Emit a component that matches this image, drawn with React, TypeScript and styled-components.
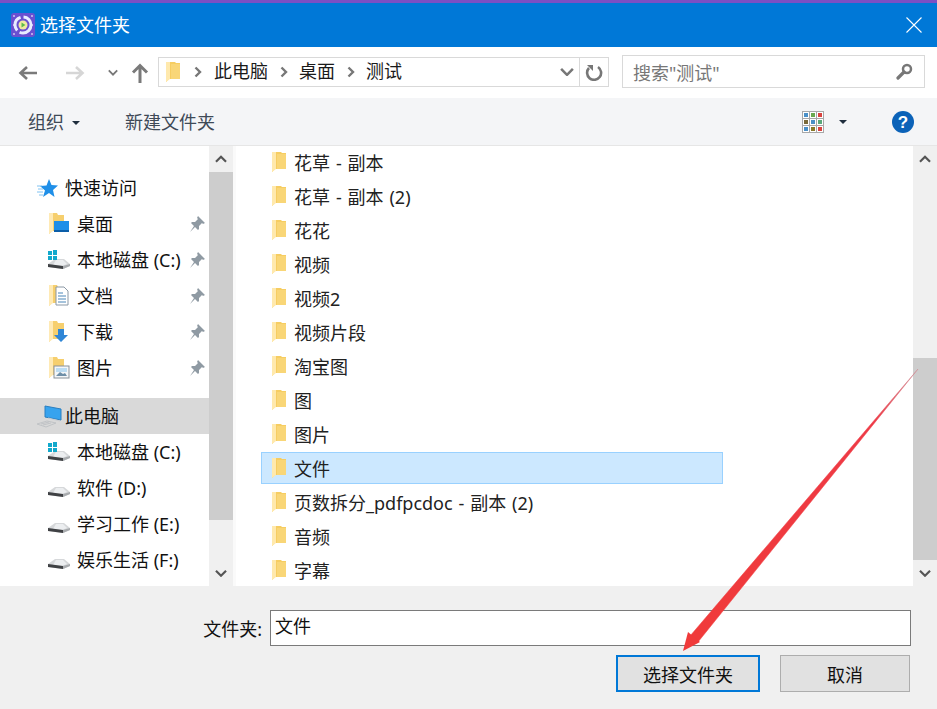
import React from "react";
import styled, { createGlobalStyle } from "styled-components";

const Global = createGlobalStyle`
  html, body { margin: 0; padding: 0; background: #f0f0f0; }
  * { box-sizing: border-box; }
`;

const Dialog = styled.div`
  position: relative;
  width: 937px;
  height: 709px;
  overflow: hidden;
  display: flex;
  flex-direction: column;
  font-family: "Noto Sans", "Noto Sans CJK SC", sans-serif;
  font-size: 18px;
  color: #1a1a1a;
  background: #f0f0f0;
`;

const TitleBar = styled.header`
  height: 47px;
  flex: none;
  display: flex;
  align-items: center;
  gap: 5px;
  padding: 0 15px 0 11px;
  background: #0078d7;
  border-top: 3px solid #7c4fc4;
  color: #fff;
`;
const Title = styled.span`
  flex: 1;
  line-height: 24px;
  margin-top: -1px;
`;

const NavBar = styled.nav`
  height: 51px;
  flex: none;
  display: flex;
  align-items: center;
  background: #fff;
  padding-left: 18px;
`;
const NavButton = styled.span<{ $w: number }>`
  width: ${(p) => p.$w}px;
  flex: none;
  height: 24px;
  display: flex;
  align-items: center;
`;
const AddressBox = styled.div`
  width: 451px;
  height: 30px;
  flex: none;
  margin-top: -2px;
  border: 1px solid #d9d9d9;
  display: flex;
  align-items: center;
  padding-left: 6px;
`;
const Crumbs = styled.div`
  flex: 1;
  display: flex;
  align-items: center;
`;
const Crumb = styled.span`
  line-height: 24px;
  margin-top: -1px;
`;
const CrumbSep = styled.span<{ $w: number }>`
  width: ${(p) => p.$w}px;
  display: flex;
  justify-content: center;
  flex: none;
`;
const AddressEnd = styled.div`
  width: 29px;
  height: 100%;
  border-left: 1px solid #d9d9d9;
  display: flex;
  align-items: center;
  justify-content: center;
`;
const DropSlot = styled.span`
  display: flex;
  margin-right: 5px;
`;
const SearchBox = styled.div`
  width: 303px;
  height: 33px;
  margin: -2px 0 0 13px;
  flex: none;
  border: 1px solid #d9d9d9;
  display: flex;
  align-items: center;
  justify-content: space-between;
  padding: 0 11px 0 10px;
  color: #777;
`;

const Toolbar = styled.div`
  height: 48px;
  flex: none;
  display: flex;
  align-items: center;
  background: #f4f5f7;
  border-bottom: 1px solid #e6e6e6;
  padding: 0 22px 0 28px;
  color: #3f4a57;
`;
const ToolText = styled.span`
  line-height: 24px;
`;
const Caret = styled.span`
  width: 0;
  height: 0;
  border-left: 4px solid transparent;
  border-right: 4px solid transparent;
  border-top: 4px solid #1f2d3d;
`;
const OrgCaret = styled(Caret)`
  margin: 2px 45px 0 8px;
`;
const Spacer = styled.span`
  flex: 1;
`;
const ViewCaret = styled(Caret)`
  margin: 0 44px 0 15px;
`;

const Main = styled.main`
  height: 440px;
  flex: none;
  display: flex;
  background: #fff;
`;
const Sidebar = styled.aside`
  width: 209px;
  flex: none;
  padding-top: 24px;
  overflow: hidden;
`;
const SideRow = styled.div<{ $level: number; $selected?: boolean; $gap?: number }>`
  height: 36px;
  margin-top: ${(p) => p.$gap ?? 0}px;
  display: flex;
  align-items: center;
  padding-left: ${(p) => (p.$level === 0 ? 37 : 47)}px;
  padding-right: 4px;
  background: ${(p) => (p.$selected ? "#d9d9d9" : "transparent")};
`;
const SideIcon = styled.span<{ $level: number }>`
  width: ${(p) => (p.$level === 0 ? 28 : 30)}px;
  height: 24px;
  flex: none;
  display: flex;
  align-items: center;
`;
const SideLabel = styled.span`
  flex: 1;
  white-space: nowrap;
  line-height: 24px;
  color: #111;
`;
const Scrollbar = styled.div`
  width: 24px;
  flex: none;
  background: #f0f0f0;
  display: flex;
  flex-direction: column;
`;
const ScrollArrow = styled.div<{ $h: number }>`
  height: ${(p) => p.$h}px;
  flex: none;
  display: flex;
  align-items: center;
  justify-content: center;
`;
const ScrollTrack = styled.div<{ $justify: string }>`
  flex: 1;
  display: flex;
  flex-direction: column;
  justify-content: ${(p) => p.$justify};
`;
const ScrollThumb = styled.div<{ $h: number }>`
  height: ${(p) => p.$h}px;
  background: #cdcdcd;
`;
const Gutter = styled.div`
  width: 3px;
  flex: none;
  background: #fafafa;
`;
const FileList = styled.section`
  flex: 1;
  display: flex;
  flex-direction: column;
  padding-left: 25px;
  overflow: hidden;
`;
const FileRow = styled.div<{ $selected?: boolean }>`
  width: 462px;
  height: 32px;
  flex: none;
  margin: 1px 0;
  &:first-child {
    margin-top: 0;
  }
  display: flex;
  align-items: center;
  gap: 8px;
  padding-left: 9px;
  border: 1px solid ${(p) => (p.$selected ? "#99d1ff" : "transparent")};
  background: ${(p) => (p.$selected ? "#cce8ff" : "transparent")};
  color: #222;
  white-space: nowrap;
  word-spacing: 1.2px;
`;
const FileName = styled.span`
  margin-left: -1px;
`;

const Footer = styled.footer`
  flex: 1;
  display: flex;
  flex-direction: column;
  padding: 24px 26px 0 0;
`;
const FieldRow = styled.div`
  display: flex;
  align-items: center;
  justify-content: flex-end;
  gap: 8px;
`;
const FieldLabel = styled.label`
  color: #111;
`;
const FieldInput = styled.div`
  width: 641px;
  height: 36px;
  border: 1px solid #7a7a7a;
  background: #fff;
  color: #111;
  padding: 2px 4px;
  line-height: 26px;
`;
const Buttons = styled.div`
  display: flex;
  justify-content: flex-end;
  gap: 20px;
  margin-top: 9px;
  padding-right: 1px;
`;
const Button = styled.div<{ $primary?: boolean }>`
  width: ${(p) => (p.$primary ? 144 : 130)}px;
  height: 37px;
  display: flex;
  align-items: center;
  justify-content: center;
  background: #e1e1e1;
  border: ${(p) => (p.$primary ? "2px solid #0078d7" : "1px solid #adadad")};
  color: #111;
`;
const ArrowLayer = styled.svg`
  position: absolute;
  left: 0;
  top: 0;
  pointer-events: none;
`;

const Folder = () => (
  <svg width="16" height="22" viewBox="0 0 16 22">
    <path d="M1 1h9l1 1h4v16H4l-3 3z" fill="#f6cd62" />
    <path d="M6 3h9v15H6z" fill="#f9d677" />
    <path d="M1 1h4v17l-4 3z" fill="#ffe9ad" />
  </svg>
);
const SmallFolderBase = () => (
  <>
    <path d="M2 1h8l1 2h6v16H5l-3 3z" fill="#f6cf6e" />
    <path d="M2 1h4v18l-4 3z" fill="#ffeab5" />
  </>
);
const DesktopIcon = () => (
  <svg width="26" height="24" viewBox="0 0 26 24">
    <SmallFolderBase />
    <rect x="7" y="9" width="15" height="11" fill="#1e8fe8" />
    <rect x="7" y="18" width="15" height="2" fill="#0b5ea8" />
  </svg>
);
const DocIcon = () => (
  <svg width="26" height="24" viewBox="0 0 26 24">
    <SmallFolderBase />
    <path d="M9 3h8l4 4v14H9z" fill="#fff" stroke="#8b98a5" />
    <path d="M11 9h5M11 12h8M11 15h8M11 18h8" stroke="#4a86b8" />
  </svg>
);
const DownloadIcon = () => (
  <svg width="26" height="24" viewBox="0 0 26 24">
    <SmallFolderBase />
    <path d="M11 9h6v6h4l-7 7-7-7h4z" fill="#2f86d6" />
  </svg>
);
const PictureIcon = () => (
  <svg width="26" height="24" viewBox="0 0 26 24">
    <SmallFolderBase />
    <rect x="7" y="10" width="15" height="12" fill="#f4f6f8" stroke="#8a929a" />
    <path d="M9 20l4-4 3 2 2-1 2 3z" fill="#6f8fa8" />
    <rect x="9" y="12" width="11" height="4" fill="#bcdcf2" />
  </svg>
);
const DriveIcon = ({ win }: { win?: boolean }) => (
  <svg width="24" height="24" viewBox="0 0 24 24">
    <path d="M1 16l7-5h9l6 5v2l-7 3-15-2z" fill="#d6d8da" />
    <path d="M9 12h7l4 4-5 2-9-1z" fill="#eceef0" />
    <path d="M1 16l15 2v3L1 19z" fill="#3f4144" />
    <path d="M16 18l7-2v2l-7 3z" fill="#a8abae" />
    {win && (
      <g fill="#12a9cc">
        <rect x="1" y="3" width="4" height="4" />
        <rect x="6" y="2" width="4" height="5" />
        <rect x="1" y="8" width="4" height="4" />
        <rect x="6" y="8" width="4" height="4" />
      </g>
    )}
  </svg>
);
const StarIcon = () => (
  <svg width="21" height="20" viewBox="0 0 21 20">
    <path d="M12 1l2.500 6 6.500 .5-5 4.500 1.500 7-5.500-4-6 4 2-6.500L3 8l6.500-.5z" fill="#1f8fe8" />
    <path d="M0 8h5M1 11h5M0 14h6M2 17h4" stroke="#7fc2f2" />
  </svg>
);
const PcIcon = () => (
  <svg width="26" height="24" viewBox="0 0 26 24">
    <path d="M8 2l16 3v11L8 13z" fill="#37a3ee" stroke="#2a7fc0" />
    <path d="M11 14l12 3" stroke="#c9ccd0" />
    <path d="M0 20l10-3 9 2-10 4z" fill="none" stroke="#c0c3c6" />
    <path d="M4 20l8-2M6 21l8-2" stroke="#c0c3c6" />
  </svg>
);
const Pin = () => (
  <svg width="16" height="16" viewBox="0 0 16 16">
    <path d="M9 0l7 7-2 1-1-1-3 3 0 3-1 1-3-3-5 5 4-6-3-3 1-1h3l3-3-1-1z" fill="#8f9aa3" />
  </svg>
);
const Chevron = ({ up, c = "#555", w = 14 }: { up?: boolean; c?: string; w?: number }) => (
  <svg width={w} height={w * 0.7} viewBox="0 0 14 10">
    <path d={up ? "M1 8l6-6 6 6" : "M1 2l6 6 6-6"} fill="none" stroke={c} strokeWidth="2.600" />
  </svg>
);
const CrumbArrow = () => (
  <svg width="8" height="12" viewBox="0 0 8 12">
    <path d="M1.500 1.500L6 6l-4.500 4.500" fill="none" stroke="#777" strokeWidth="2.400" />
  </svg>
);
const Horizontal = ({ c, flip }: { c: string; flip?: boolean }) => (
  <svg width="20" height="16" viewBox="0 0 20 16" style={flip ? { transform: "scaleX(-1)" } : undefined}>
    <path d="M19 8H3M9 2L2.500 8 9 14" fill="none" stroke={c} strokeWidth="2.600" />
  </svg>
);
const AppIcon = () => (
  <svg width="24" height="24" viewBox="0 0 24 24">
    <rect width="24" height="24" rx="3" fill="#6a4fd0" />
    <circle cx="12" cy="12" r="8" fill="none" stroke="#e8ecff" strokeWidth="3" strokeDasharray="16 3" />
    <circle cx="12" cy="12" r="4.500" fill="#efe9a0" />
    <path d="M10.500 9.500l4 2.500-4 2.500z" fill="#5dbb4a" />
    <path d="M2 3h2M2 21h2M20 3h2M20 21h2M2 12h1M21 12h1" stroke="#fff" />
  </svg>
);
const ViewIcon = () => {
  const colors = ["#4a90c8", "#6aa84f", "#d9433f", "#7a6a3a", "#4a90c8", "#5aa87a", "#4a90c8", "#8a7a2a", "#d9433f"];
  return (
    <svg width="22" height="22" viewBox="0 0 22 22">
      <rect x=".5" y=".5" width="21" height="21" fill="#fff" stroke="#a8a8a8" />
      <path d="M7.500 0v22M14.500 0v22M0 7.500h22M0 14.500h22" stroke="#a8a8a8" />
      {colors.map((c, i) => (
        <rect key={i} x={2 + (i % 3) * 7} y={2 + Math.floor(i / 3) * 7} width="4" height="4" fill={c} />
      ))}
    </svg>
  );
};

const quick = [
  { label: "桌面", icon: <DesktopIcon /> },
  { label: "本地磁盘 (C:)", icon: <DriveIcon win /> },
  { label: "文档", icon: <DocIcon /> },
  { label: "下载", icon: <DownloadIcon /> },
  { label: "图片", icon: <PictureIcon /> },
];
const drives = [
  { label: "本地磁盘 (C:)", win: true },
  { label: "软件 (D:)" },
  { label: "学习工作 (E:)" },
  { label: "娱乐生活 (F:)" },
];
const files = ["花草 - 副本", "花草 - 副本 (2)", "花花", "视频", "视频2", "视频片段", "淘宝图", "图", "图片", "文件", "页数拆分_pdfpcdoc - 副本 (2)", "音频", "字幕"];

export default function App() {
  return (
    <Dialog>
      <Global />
      <TitleBar>
        <AppIcon />
        <Title>选择文件夹</Title>
        <svg width="16" height="16" viewBox="0 0 16 16">
          <path d="M.5.5l15 15M15.500.5l-15 15" stroke="#fff" strokeWidth="1.100" />
        </svg>
      </TitleBar>
      <NavBar>
        <NavButton $w={47}><Horizontal c="#7a7a7a" /></NavButton>
        <NavButton $w={43}><Horizontal c="#d6d6d6" flip /></NavButton>
        <NavButton $w={23}><Chevron w={10} c="#777" /></NavButton>
        <NavButton $w={27}>
          <svg width="18" height="20" viewBox="0 0 18 20">
            <path d="M9 20V3M2 9.500L9 2.500l7 7" fill="none" stroke="#7a7a7a" strokeWidth="3" />
          </svg>
        </NavButton>
        <AddressBox>
          <Crumbs>
            <Folder />
            <CrumbSep $w={33}><CrumbArrow /></CrumbSep>
            <Crumb>此电脑</Crumb>
            <CrumbSep $w={31}><CrumbArrow /></CrumbSep>
            <Crumb>桌面</Crumb>
            <CrumbSep $w={31}><CrumbArrow /></CrumbSep>
            <Crumb>测试</Crumb>
          </Crumbs>
          <DropSlot><Chevron w={14} c="#777" /></DropSlot>
          <AddressEnd>
            <svg width="18" height="18" viewBox="0 0 18 18">
              <path d="M4 5a7 7 0 1 0 9-1" fill="none" stroke="#777" strokeWidth="2.600" />
              <path d="M1 1h6v6z" fill="#777" transform="translate(1 1)" />
            </svg>
          </AddressEnd>
        </AddressBox>
        <SearchBox>
          <span>搜索"测试"</span>
          <svg width="17" height="17" viewBox="0 0 17 17">
            <circle cx="11" cy="6" r="4" fill="none" stroke="#777" strokeWidth="2.500" />
            <path d="M8 9l-6 6" stroke="#777" strokeWidth="3.200" strokeLinecap="round" />
          </svg>
        </SearchBox>
      </NavBar>
      <Toolbar>
        <ToolText>组织</ToolText>
        <OrgCaret />
        <ToolText>新建文件夹</ToolText>
        <Spacer />
        <ViewIcon />
        <ViewCaret />
        <svg width="24" height="24" viewBox="0 0 24 24">
          <circle cx="12" cy="12" r="11" fill="#0b62b8" />
          <text x="12" y="18" textAnchor="middle" fontSize="17" fontWeight="700" fill="#fff" fontFamily="Liberation Sans, sans-serif">?</text>
        </svg>
      </Toolbar>
      <Main>
        <Sidebar>
          <SideRow $level={0}>
            <SideIcon $level={0}><StarIcon /></SideIcon>
            <SideLabel>快速访问</SideLabel>
          </SideRow>
          {quick.map((q) => (
            <SideRow key={q.label} $level={1}>
              <SideIcon $level={1}>{q.icon}</SideIcon>
              <SideLabel>{q.label}</SideLabel>
              <Pin />
            </SideRow>
          ))}
          <SideRow $level={0} $selected $gap={12}>
            <SideIcon $level={0}><PcIcon /></SideIcon>
            <SideLabel>此电脑</SideLabel>
          </SideRow>
          {drives.map((d) => (
            <SideRow key={d.label} $level={1}>
              <SideIcon $level={1}><DriveIcon win={d.win} /></SideIcon>
              <SideLabel>{d.label}</SideLabel>
            </SideRow>
          ))}
        </Sidebar>
        <Scrollbar>
          <ScrollArrow $h={26}><Chevron up w={12} /></ScrollArrow>
          <ScrollTrack $justify="flex-start"><ScrollThumb $h={348} /></ScrollTrack>
          <ScrollArrow $h={26}><Chevron w={12} /></ScrollArrow>
        </Scrollbar>
        <Gutter />
        <FileList>
          {files.map((f) => (
            <FileRow key={f} $selected={f === "文件"}>
              <Folder />
              <FileName>{f}</FileName>
            </FileRow>
          ))}
        </FileList>
        <Scrollbar>
          <ScrollArrow $h={26}><Chevron up w={12} /></ScrollArrow>
          <ScrollTrack $justify="flex-end"><ScrollThumb $h={202} /></ScrollTrack>
          <ScrollArrow $h={26}><Chevron w={12} /></ScrollArrow>
        </Scrollbar>
      </Main>
      <Footer>
        <FieldRow>
          <FieldLabel>文件夹:</FieldLabel>
          <FieldInput>文件</FieldInput>
        </FieldRow>
        <Buttons>
          <Button $primary>选择文件夹</Button>
          <Button>取消</Button>
        </Buttons>
      </Footer>
      <ArrowLayer width="937" height="709" viewBox="0 0 937 709">
        <defs>
          <linearGradient id="fade" x1="917" y1="370" x2="700" y2="630" gradientUnits="userSpaceOnUse">
            <stop offset="0" stopColor="#d08a94" />
            <stop offset="0.2" stopColor="#ee3a46" />
            <stop offset="1" stopColor="#f03a3a" />
          </linearGradient>
        </defs>
        <path d="M918 369L698 642L690 636z" fill="url(#fade)" stroke="url(#fade)" strokeWidth="0.500" />
        <path d="M683 651L688 632L700 642z" fill="#f03a3a" />
      </ArrowLayer>
    </Dialog>
  );
}
